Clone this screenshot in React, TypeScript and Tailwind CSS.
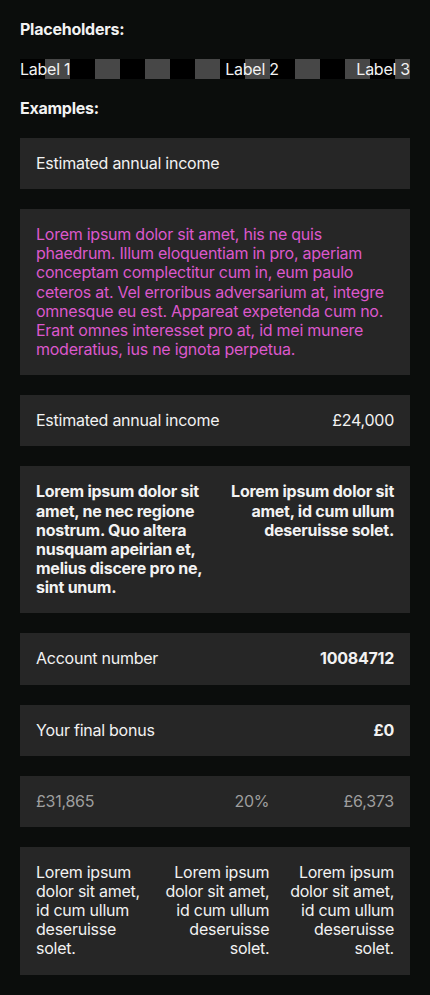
const loremShort = "Lorem ipsum dolor sit amet, id cum ullum deseruisse solet.";

function Card({ children, className = "" }: { children: React.ReactNode; className?: string }) {
    return (
        <div className={`bg-[#262626] px-4 py-4 leading-[19.15px] ${className}`}>
            {children}
        </div>
    );
}

function Row({ label, value, bold = false }: { label: string; value: string; bold?: boolean }) {
    return (
        <Card className="flex items-center justify-between">
            <span>{label}</span>
            <span className={bold ? "font-bold" : ""}>{value}</span>
        </Card>
    );
}

export default function App() {
    return (
        <main
            className="min-h-screen border-b-2 border-[#5e5e5e] bg-[#0b0d0c] text-[#f2f2f2] text-[16px] tracking-[-0.25px]"
            style={{ fontFamily: "Inter, 'Noto Sans', sans-serif" }}
        >
            <div className="flex flex-col gap-5 p-5">
                <h2 className="font-bold leading-[19px]">Placeholders:</h2>

                {/* striped strip shows the layout slots */}
                <div className="flex h-5 items-center leading-5 bg-[repeating-linear-gradient(90deg,#000_0px,#000_25px,#474747_25px,#474747_50px)]">
                    <span>Label 1</span>
                    <span className="flex-[2]" />
                    <span>Label 2</span>
                    <span className="flex-1" />
                    <span>Label 3</span>
                </div>

                <h2 className="font-bold leading-[19px]">Examples:</h2>

                <Card>Estimated annual income</Card>

                <Card className="text-[#dc58cc]">
                    Lorem ipsum dolor sit amet, his ne quis phaedrum. Illum eloquentiam in pro, aperiam conceptam
                    complectitur cum in, eum paulo ceteros at. Vel erroribus adversarium at, integre omnesque eu est.
                    Appareat expetenda cum no. Erant omnes interesset pro at, id mei munere moderatius, ius ne ignota
                    perpetua.
                </Card>

                <Row label="Estimated annual income" value="£24,000" />

                <Card className="grid grid-cols-2 gap-4 font-bold">
                    <p>
                        Lorem ipsum dolor sit amet, ne nec regione nostrum. Quo altera nusquam apeirian et, melius
                        discere pro ne, sint unum.
                    </p>
                    <p className="text-right">{loremShort}</p>
                </Card>

                <Row label="Account number" value="10084712" bold />
                <Row label="Your final bonus" value="£0" bold />

                <Card className="grid grid-cols-3 gap-4 text-[#9e9e9e]">
                    <span>£31,865</span>
                    <span className="text-right">20%</span>
                    <span className="text-right">£6,373</span>
                </Card>

                <Card className="grid grid-cols-3 gap-4">
                    <p>{loremShort}</p>
                    <p className="text-right">{loremShort}</p>
                    <p className="text-right">{loremShort}</p>
                </Card>
            </div>
        </main>
    );
}
